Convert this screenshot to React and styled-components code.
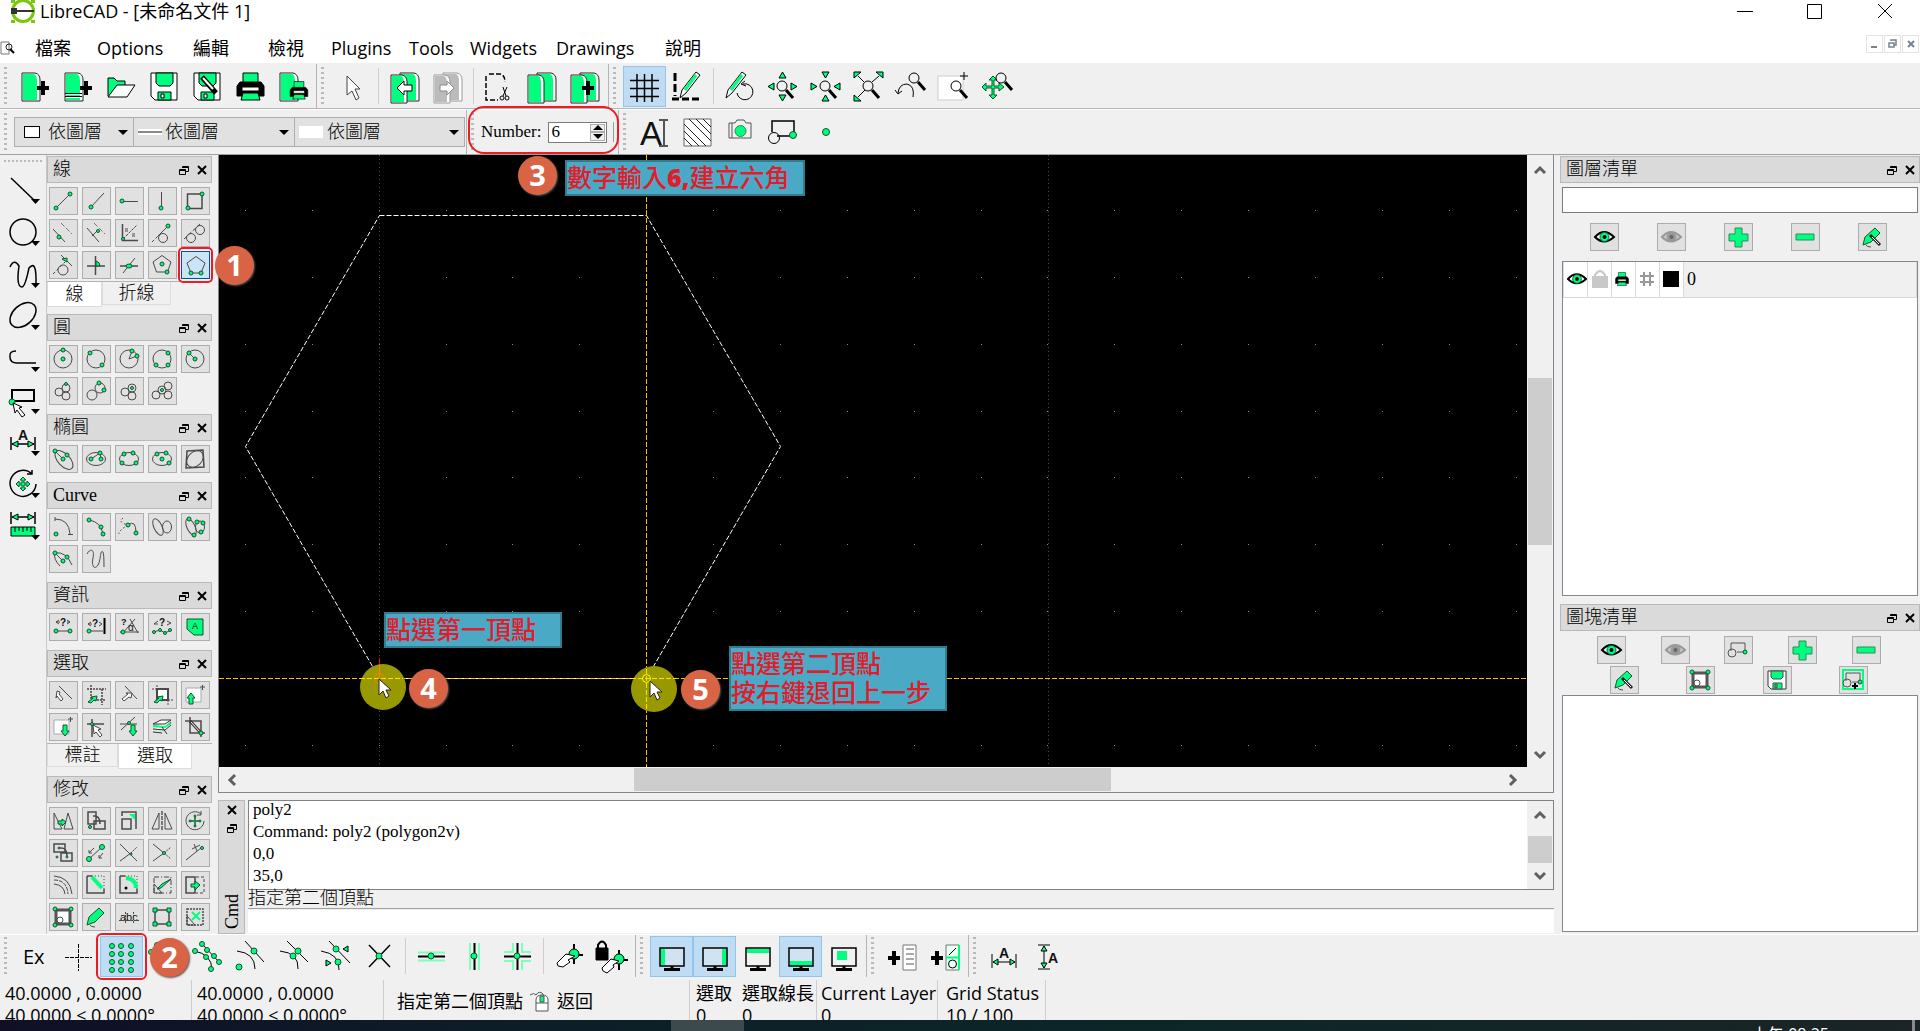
import React from "react";
import styled, { createGlobalStyle, css } from "styled-components";

const GREEN = "#00ff7f";

const UI_FONT = `"Open Sans", "Noto Sans CJK TC", sans-serif`;
const DOCK_FONT = `"Liberation Serif", "Noto Sans CJK TC", serif`;

const GlobalStyle = createGlobalStyle`
  * { box-sizing: border-box; }
  body {
    margin: 0;
    overflow: hidden;
    background: #f0f0f0;
    color: #000;
    font-family: ${UI_FONT};
    font-size: 18px;
    font-weight: 400;
  }
  button, input, select { font: inherit; color: inherit; }
  svg { display: block; }
`;

/* ---------- window ---------- */

const Window = styled.div`
  display: flex;
  flex-direction: column;
  height: 100vh;
  background: #f0f0f0;
`;

const TitleBar = styled.header`
  display: flex;
  height: 25px;
  padding-left: 11px;
  background: #fff;
  flex: none;
`;

const Title = styled.h1`
  flex: 1;
  margin: 0;
  padding-left: 5px;
  font-size: 18px;
  font-weight: 400;
  line-height: 23px;
  white-space: nowrap;
`;

const WindowControls = styled.div`
  display: flex;
`;

const WindowButton = styled.button`
  display: flex;
  justify-content: center;
  width: 70px;
  height: 24px;
  padding: 3px 0 0;
  border: 0;
  background: transparent;
`;

const MenuBar = styled.nav`
  display: flex;
  align-items: center;
  height: 38px;
  padding-top: 8px;
  background: #fff;
  flex: none;
`;

const MenuItem = styled.button`
  width: ${(p) => p.$w}px;
  height: 28px;
  padding: 0;
  border: 0;
  background: transparent;
  font-size: 18px;
  line-height: 28px;
  text-align: left;
  white-space: nowrap;
`;

const DocIcon = styled.div`
  width: 35px;
`;

const MdiControls = styled.div`
  display: flex;
  gap: 1px;
  margin-left: auto;
  padding: 0 1px 8px 0;
`;

const MdiButton = styled.button`
  width: 17px;
  height: 18px;
  padding: 0;
  border: 1px solid #e3e3e3;
  background: #fff;
`;

/* ---------- toolbars ---------- */

const ToolRow = styled.div`
  display: flex;
  flex: none;
  height: 46px;
  padding-bottom: ${(p) => (p.$raised ? 2 : 0)}px;
  border-top: 1px solid ${(p) => (p.$light ? "#f0f0f0" : "#fff")};
  border-bottom: 1px solid ${(p) => p.$line || "#b4b4b4"};
`;

const ToolBar = styled.div`
  position: relative;
  display: flex;
  align-items: center;
  padding-right: 1px;
  border-right: ${(p) => (p.$last ? "0" : "1px solid #b4b4b4")};
`;

const Grip = styled.span`
  width: 3px;
  height: 38px;
  margin: 0 7px 0 4px;
  background: repeating-linear-gradient(#b9b9b9 0 2px, transparent 2px 5px);
`;

const Separator = styled.span`
  width: 1px;
  height: 36px;
  margin: 0 4px;
  background: #cdcdcd;
`;

const ToolButton = styled.button`
  position: relative;
  width: 43px;
  height: 41px;
  padding: 0;
  border: 0;
  background: transparent;
  font-size: 20px;
  ${(p) =>
    p.$on &&
    css`
      background: #bfdcf3;
      box-shadow: inset 0 0 0 1px #8ec6f2;
    `}
`;

const Combo = styled.label`
  display: flex;
  align-items: center;
  width: ${(p) => p.$w}px;
  height: 30px;
  margin-left: -1px;
  padding: 0 5px 0 ${(p) => p.$pad}px;
  border: 1px solid #adadad;
  background: #e1e1e1;
`;

const Combos = styled.div`
  display: flex;
  padding-left: 1px;
`;

const Select = styled.select`
  flex: 1;
  min-width: 0;
  padding: 0;
  border: 0;
  background: transparent;
  appearance: none;
  font-family: ${DOCK_FONT};
  font-weight: 300;
  font-size: 18px;
`;

const Caret = styled.span`
  border: 5px solid transparent;
  border-top-color: #000;
  border-bottom: 0;
`;

const Swatch = styled.span`
  width: ${(p) => p.$w}px;
  height: 12px;
  margin-right: ${(p) => p.$gap}px;
  border: ${(p) => (p.$framed ? "1px solid #000" : "0")};
  background: #fff;
`;

const LineSwatch = styled.span`
  width: 24px;
  height: 6px;
  margin-right: 3px;
  border: solid #fff;
  border-width: 2px 0;
  background: #888;
`;

const NumberLabel = styled.label`
  margin-right: 7px;
  font-family: ${DOCK_FONT};
  font-size: 17px;
`;

const NumberBox = styled.div`
  display: flex;
  width: 59px;
  height: 21px;
  margin-right: 6px;
  border: 1px solid #7a7a7a;
  background: #fff;
`;

const NumberInput = styled.input`
  flex: 1;
  min-width: 0;
  padding: 0 2px;
  border: 0;
  background: transparent;
  font-family: ${DOCK_FONT};
  font-size: 17px;
`;

const Spinner = styled.div`
  display: flex;
  flex-direction: column;
  width: 15px;
  margin: 1px;
`;

const SpinButton = styled.button`
  display: grid;
  place-items: center;
  flex: 1;
  min-height: 0;
  padding: 0;
  border: 1px solid #adadad;
  background: #f0f0f0;
`;

const Clipped = styled.span`
  width: 1px;
  height: 20px;
  margin-right: 3px;
  background: #999;
`;

/* ---------- annotations ---------- */

const RedFrame = styled.span`
  position: absolute;
  inset: ${(p) => p.$inset};
  z-index: 4;
  border: 2px solid #ed1c24;
  border-radius: ${(p) => p.$r}px;
  pointer-events: none;
`;

const Badge = styled.span`
  position: absolute;
  left: ${(p) => p.$x}px;
  top: ${(p) => p.$y}px;
  z-index: 5;
  width: 39px;
  height: 39px;
  border-radius: 50%;
  background: #d96445;
  box-shadow: 1px 1px 2px #555;
  color: #fff;
  font-family: "Open Sans", sans-serif;
  font-size: 29px;
  font-weight: 700;
  line-height: 38px;
  text-align: center;
`;

const Callout = styled.div`
  position: absolute;
  left: ${(p) => p.$x}px;
  top: ${(p) => p.$y}px;
  width: ${(p) => p.$w}px;
  padding: 1px 0 2px;
  border: 2px solid #317d8f;
  background: #4aa9c5;
  color: #e31b2b;
  font-family: ${UI_FONT};
  font-size: 25px;
  font-weight: 500;
  line-height: 29px;
  white-space: nowrap;

  b { font-weight: 800; }
`;

/* ---------- work area ---------- */

const Body = styled.main`
  display: flex;
  flex: 1;
  min-height: 0;
`;

const SideBar = styled.div`
  width: 47px;
  padding-top: 5px;
  border-right: 1px solid #c8c8c8;
  flex: none;
`;

const SideGrip = styled.span`
  display: block;
  width: 38px;
  height: 2px;
  margin: 0 0 8px 4px;
  background: repeating-linear-gradient(90deg, #b9b9b9 0 2px, transparent 2px 4px);
`;

const SideButton = styled.button`
  display: block;
  width: 46px;
  height: 42px;
  padding: 0;
  border: 0;
  background: transparent;
`;

const DockColumn = styled.div`
  width: 165px;
  margin-right: 6px;
  padding-top: 1px;
  flex: none;
`;

const DockHeader = styled.div`
  display: flex;
  align-items: center;
  height: 27px;
  margin-bottom: ${(p) => p.$gap || 0}px;
  padding-left: 5px;
  border: 1px solid #b9b9b9;
  background: #dadada;
`;

const DockTitle = styled.h2`
  flex: 1;
  margin: 0;
  font-family: ${DOCK_FONT};
  font-size: 18px;
  font-weight: 300;
  line-height: 25px;
`;

const TinyButton = styled.button`
  width: 18px;
  height: 18px;
  padding: 4px;
  border: 0;
  background: transparent;
`;

const ButtonGrid = styled.div`
  display: grid;
  grid-template-columns: repeat(5, 29px);
  gap: 4px;
  padding: 4px 2px ${(p) => (p.$tabs ? 2 : 9)}px;
`;

const DockButton = styled.button`
  position: relative;
  width: 29px;
  height: 28px;
  padding: 0;
  border: 0;
  background: ${(p) => (p.$on ? "#cce4f7" : "#e1e1e1")};
  box-shadow: inset 0 0 0 1px ${(p) => (p.$on ? "#005499" : "#adadad")};
`;

const Tabs = styled.div`
  display: flex;
  height: 33px;
  align-items: flex-start;
  border-top: 1px solid #b4b4b4;
`;

const Tab = styled.button`
  width: ${(p) => p.$w}px;
  height: ${(p) => (p.$on ? 25 : 23)}px;
  padding: 0;
  border: 1px solid #dcdcdc;
  border-top: 0;
  background: ${(p) => (p.$on ? "#fff" : "#f0f0f0")};
  font-family: ${DOCK_FONT};
  font-size: 18px;
  font-weight: 300;
  line-height: 22px;
`;

const Center = styled.div`
  display: flex;
  flex-direction: column;
  flex: 1;
  min-width: 0;
`;

const Viewport = styled.section`
  display: grid;
  grid-template-columns: minmax(0, 1fr) 26px;
  grid-template-rows: minmax(0, 1fr) 25px;
  flex: 1;
  min-height: 0;
  border: 1px solid #828790;
  border-top: 0;
`;

const Canvas = styled.div`
  position: relative;
  background: #000;
`;

const ScrollBar = styled.div`
  display: flex;
  flex-direction: ${(p) => (p.$vertical ? "column" : "row")};
  min-width: 26px;
  padding: ${(p) => (p.$vertical ? "0 1px" : "1px 0")};
  background: #f0f0f0;
`;

const ScrollArrow = styled.button`
  display: grid;
  place-items: center;
  flex: 0 0 ${(p) => p.$size}px;
  padding: 0;
  border: 0;
  background: transparent;
`;

const Track = styled.span`
  flex: ${(p) => p.$size};
  background: ${(p) => (p.$thumb ? "#cdcdcd" : "transparent")};
`;

const CommandDock = styled.section`
  display: flex;
  gap: 3px;
  height: 134px;
  margin-top: 7px;
  flex: none;
`;

const CommandSide = styled.div`
  display: flex;
  flex-direction: column;
  align-items: center;
  width: 27px;
  border: 1px solid #b9b9b9;
  background: #dadada;
`;

const CommandTitle = styled.h2`
  margin: auto 0 4px;
  font-family: ${DOCK_FONT};
  font-size: 18px;
  font-weight: 400;
  line-height: 24px;
  writing-mode: vertical-rl;
  transform: rotate(180deg);
`;

const CommandMain = styled.div`
  display: flex;
  flex-direction: column;
  flex: 1;
  min-width: 0;
  font-family: ${DOCK_FONT};
`;

const CommandLog = styled.div`
  display: flex;
  height: 90px;
  border: 1px solid #828282;
  background: #fff;
`;

const LogLines = styled.div`
  display: flex;
  flex-direction: column;
  justify-content: flex-end;
  flex: 1;
  padding: 0 4px 2px;
  font-size: 17px;
  line-height: 22px;
  overflow: hidden;
`;

const CommandLabel = styled.label`
  height: 19px;
  border-bottom: 1px solid #a0a0a0;
  font-size: 18px;
  font-weight: 300;
  line-height: 17px;
`;

const CommandInput = styled.input`
  flex: 1;
  min-height: 0;
  margin: 1px 0;
  border: 0;
  background: #fff;
`;

const RightDock = styled.aside`
  display: flex;
  flex-direction: column;
  width: 360px;
  margin-left: 6px;
  padding-top: 1px;
  flex: none;
`;

const FilterInput = styled.input`
  height: 26px;
  margin: 4px 2px 10px;
  border: 1px solid #7a7a7a;
  background: #fff;
`;

const ButtonLine = styled.div`
  display: flex;
  justify-content: ${(p) => (p.$spread ? "space-between" : "space-evenly")};
  margin: 0 2px 2px;
  padding: ${(p) => (p.$spread ? "0 31px 0 28px" : "0 2px 0 0")};
`;

const ListBox = styled.div`
  flex: ${(p) => (p.$h ? `0 0 ${p.$h}px` : "1")};
  margin: ${(p) => p.$margin};
  border: 1px solid #828790;
  background: #fff;
`;

const LayerTable = styled.table`
  width: 100%;
  border-collapse: collapse;

  td {
    width: 24px;
    height: 35px;
    padding: 0 0 0 3px;
    border: 1px solid #d8d8d8;
    border-top: 0;
    background: #fff;
  }
  td:last-child {
    width: auto;
    background: #f0f0f0;
    font-family: ${DOCK_FONT};
    font-size: 18px;
  }
`;

const LayerColor = styled.span`
  display: block;
  width: 16px;
  height: 16px;
  background: #000;
`;

/* ---------- bottom ---------- */

const StatusBar = styled.footer`
  display: flex;
  flex: none;
  height: 40px;
  overflow: hidden;
  font-size: 18px;
`;

const StatusCell = styled.div`
  width: ${(p) => p.$w}px;
  padding-left: ${(p) => p.$pad || 5}px;
  padding-top: 2px;
  border-right: ${(p) => (p.$plain ? "0" : "1px solid #cdcdcd")};
  line-height: 22px;
  white-space: nowrap;
`;

const StatusHint = styled(StatusCell)`
  display: flex;
  align-items: center;
  gap: 7px;
`;

const TaskBar = styled.div`
  display: flex;
  justify-content: flex-end;
  flex: none;
  height: 11px;
  overflow: hidden;
  background: linear-gradient(90deg, transparent 671px, #3c4a4e 671px 744px, transparent 744px),
    linear-gradient(90deg, #100f26, #0c1f28 30%, #0c2628 60%, #1b2426);
`;

const Clock = styled.span`
  margin-right: 83px;
  padding-top: 5px;
  color: #fff;
  font-size: 16px;
  line-height: 18px;
  white-space: nowrap;
`;

const ShowDesktop = styled.span`
  width: 3px;
  margin-right: 5px;
  background: #8a8a8a;
`;

/* ---------- icon pieces ---------- */

const Small = ({ children }) => (
  <svg width="29" height="28" viewBox="0 0 29 28" fill="none" stroke="#4a4a4a" aria-hidden="true">
    {children}
  </svg>
);

const Big = ({ children }) => (
  <svg width="43" height="41" viewBox="0 0 43 41" fill="none" stroke="#000" aria-hidden="true">
    {children}
  </svg>
);

// green snap points, given as [x, y] pairs
const Pts = ({ at, r = 2 }) =>
  at.map(([x, y], i) => (
    <circle key={i} cx={x} cy={y} r={r} fill={GREEN} stroke="#14532d" />
  ));

const Word = ({ x, y, size, bold, children }) => (
  <text
    x={x}
    y={y}
    fontSize={size}
    fontWeight={bold ? 700 : 400}
    fontFamily="Liberation Sans, sans-serif"
    fill="#111"
    stroke="none"
  >
    {children}
  </text>
);

const Pointer = ({ x = 0, y = 0, flip }) => (
  <path
    transform={`translate(${x} ${y})${flip ? " rotate(180)" : ""}`}
    d="M0 0 L8 4 L5 5 L9 10 L7 12 L3 7 L1 9 Z"
    fill="#fff"
    stroke="#444"
  />
);

const Lens = ({ x, y, r = 5 }) => (
  <g>
    <circle cx={x} cy={y} r={r} />
    <path d={`M${x + r - 1} ${y + r - 1} l7 8`} strokeWidth="3" />
  </g>
);

const Eye = ({ off }) => (
  <>
    <path
      d="M5 14 Q14 4 24 14 Q14 23 5 14Z"
      fill={off ? "#ccc" : "#fff"}
      stroke={off ? "#999" : "#000"}
      strokeWidth="2"
    />
    <circle cx="14.5" cy="14" r="4.5" fill={off ? "#999" : GREEN} stroke={off ? "#999" : "#064"} />
    <circle cx="14.5" cy="14" r="2" fill={off ? "#666" : "#000"} stroke="none" />
  </>
);

const FloppySmall = () => (
  <>
    <path d="M5 5H23V23H8L5 20Z" fill="#fff" stroke="#333" />
    <path d="M8 5H20V11L18 13H10L8 11Z" fill={GREEN} />
    <path d="M10 23V17H19V23Z" fill={GREEN} />
    <path d="M12 18V22H14V18Z" />
  </>
);

const BlockSmall = () => (
  <>
    <path d="M7 15V7H21V15M13 16H20" stroke="#555" />
    <circle cx="8" cy="17" r="4" stroke="#555" />
    <Pts at={[[21, 16]]} />
  </>
);

const PenSmall = () => (
  <>
    <path d="M17 5 L22 10 L13 19 L5 22 L7 14Z" fill={GREEN} stroke="#14532d" />
    <path d="M8 22 Q9 24 13 24" />
  </>
);

const BlockEdit = () => (
  <>
    <path d="M7 7H21V21H7Z" fill="#fff" strokeWidth="3" stroke="#555" />
    <circle cx="11" cy="17" r="3" fill="#fff" />
    <Pts at={[[6, 6], [22, 6], [6, 22], [22, 22]]} r={2} />
  </>
);

const Plus = () => (
  <path d="M11 5H18V11H24V18H18V24H11V18H5V11H11Z" fill={GREEN} stroke="#2e8b57" />
);

const Minus = () => <path d="M5 11H23V17H5Z" fill={GREEN} stroke="#2e8b57" />;

const PenEdit = () => (
  <>
    <PenSmall />
    <path d="M12 12 L22 22" stroke="#222" strokeWidth="3" />
    <path d="M14 14 L21 21" stroke="#fff" />
  </>
);

const FloatIcon = () => (
  <svg width="10" height="10" viewBox="0 0 10 10" fill="none" stroke="currentColor">
    <path d="M3.5 3V1.5H9.5V6.5H7M3 2.500H9" />
    <path d="M.5 4.5H6.500V9.500H.5Z M1 5.500H7" />
  </svg>
);

const CloseIcon = () => (
  <svg width="10" height="10" viewBox="0 0 10 10" fill="none" stroke="currentColor" strokeWidth="2">
    <path d="M1 1 L9 9 M9 1 L1 9" />
  </svg>
);

/* ---------- dock icons (29 x 28) ---------- */

const lineIcons = [
  ["2 Points", <><path d="M7 21L21 7" /><Pts at={[[7, 21], [21, 7]]} /></>],
  ["Angle", <><path d="M9 20L22 6" /><Pts at={[[9, 20]]} /></>],
  ["Horizontal", <><path d="M7 14.5H23" /><Pts at={[[7, 14]]} /></>],
  ["Vertical", <><path d="M13.5 5V21" /><Pts at={[[13, 21]]} /></>],
  ["Rectangle", <><path d="M6.5 7H21V21.5H6.5Z" strokeWidth="1.5" /><Pts at={[[7, 21], [21, 7]]} /></>],
  ["Parallel through point", <><path d="M4 10L16 23" /><path d="M12 4L23 15" strokeDasharray="5 2" stroke="#777" /><Pts at={[[10, 18]]} /></>],
  ["Parallel", <><path d="M5 9L17 23M10 17L15 12" /><path d="M12 4L23 15" strokeDasharray="5 2" stroke="#777" /><Pts at={[[16, 12]]} r={1.5} /></>],
  ["Bisector", <><path d="M7.5 5V21.5H23" strokeWidth="1.5" /><path d="M8 20L22 6" strokeDasharray="3 1" /><path d="M10 10H13M10 12H13M17 15H20M17 17H20" /><Pts at={[[8, 20]]} r={1.5} /></>],
  ["Tangent point circle", <><circle cx="15" cy="19" r="4.5" /><path d="M4 23L10 17" strokeDasharray="3 2" /><path d="M10 17L20 7" /><Pts at={[[20, 7]]} /></>],
  ["Tangent two circles", <><circle cx="10" cy="19" r="4.5" /><circle cx="19" cy="11" r="4.5" /><path d="M3 20L20 4" strokeDasharray="4 2" /></>],
  ["Tangent orthogonal", <><circle cx="14" cy="19" r="5" /><path d="M12 4L23 15" /><path d="M4 23L16 11" strokeDasharray="3 2" /><path d="M13 8L18 7L18 11Z" fill={GREEN} stroke="#14532d" /></>],
  ["Orthogonal", <><path d="M5 15H23M13.5 5V24" strokeWidth="1.5" /><path d="M14 10Q18 11 18 15H14Z" fill={GREEN} stroke="#14532d" /></>],
  ["Relative angle", <><path d="M5 15H23" strokeWidth="1.5" /><path d="M8 22L20 7" /><ellipse cx="14" cy="15" rx="3" ry="2" fill={GREEN} stroke="#14532d" /></>],
  ["Polygon center corner", <><path d="M14 4.5L23 11L19.5 21H8.5L5 11Z" /><Pts at={[[14, 13], [19, 21]]} /></>],
  ["Polygon two corners", <><path d="M15 5.5L24 12L20 22H10L6 12Z" /><Pts at={[[10, 22], [20, 22]]} /></>],
];

const ring = <circle cx="14" cy="14" r="9" />;

const circleIcons = [
  ["Center point", <>{ring}<Pts at={[[14, 14], [14, 5]]} /></>],
  ["Two points", <>{ring}<Pts at={[[8, 8], [20, 20]]} /></>],
  ["Two points radius", <>{ring}<path d="M17 6L14 14L22 11" /><Pts at={[[17, 6], [22, 11]]} /></>],
  ["Three points", <>{ring}<Pts at={[[8, 20], [20, 20], [20, 8]]} /></>],
  ["Center radius", <>{ring}<path d="M8 8L14 14" /><Pts at={[[14, 14], [8, 8]]} /></>],
  ["Tangential 2c 1p", <><circle cx="10" cy="15" r="4" /><circle cx="17" cy="11" r="4" /><circle cx="17" cy="19" r="4" /><Pts at={[[17, 7]]} r={1.5} /></>],
  ["Tangential 1c 2p", <><circle cx="10" cy="18" r="5" /><circle cx="18" cy="11" r="5" /><Pts at={[[17, 6], [22, 13]]} /></>],
  ["Tangential 2c radius", <><circle cx="10" cy="15" r="4" /><circle cx="17" cy="11" r="4" /><circle cx="17" cy="19" r="4" /><Pts at={[[17, 11]]} r={1.5} /></>],
  ["Tangential 3c", <><circle cx="8" cy="18" r="4" /><circle cx="20" cy="9" r="4" /><circle cx="20" cy="18" r="4" /><circle cx="14" cy="13" r="4" /><Pts at={[[14, 13]]} r={1.5} /></>],
];

const oval = <ellipse cx="14" cy="14" rx="9.5" ry="6.5" />;

const ellipseIcons = [
  ["Ellipse axis", <><ellipse cx="15" cy="15" rx="11.5" ry="6" transform="rotate(47 15 15)" /><path d="M6 6L14 14" /><Pts at={[[6, 6], [18, 10], [14, 14]]} /></>],
  ["Foci point", <>{oval}<path d="M9 14L18 8L19 14" /><Pts at={[[9, 14], [18, 8], [19, 14]]} /></>],
  ["Four points", <>{oval}<Pts at={[[9, 9], [18, 8], [7, 18], [21, 18]]} /></>],
  ["Center and three points", <>{oval}<Pts at={[[9, 9], [18, 8], [21, 18], [14, 14]]} /></>],
  ["Inscribed", <><path d="M6 6L22 5L23 22L5 23Z" strokeWidth="1.5" /><ellipse cx="14" cy="14" rx="9.5" ry="7" transform="rotate(-45 14 14)" /></>],
];

const curveIcons = [
  ["Arc center", <><path d="M6 4V8M6 6Q20 6 21 21M19 21.5H24" /><Pts at={[[7, 21]]} /></>],
  ["Arc three points", <><path d="M7 7Q19 9 21 21" /><Pts at={[[7, 7], [19, 14], [21, 21]]} /></>],
  ["Arc tangential", <><path d="M8 5Q2 9 13 12Q3 18 4 21" strokeDasharray="2 2" /><path d="M13 12Q21 6 21 20" /><Pts at={[[13, 12], [21, 20]]} /></>],
  ["Spline closed", <><ellipse cx="10" cy="14" rx="4" ry="9" transform="rotate(-25 10 14)" /><ellipse cx="19" cy="14" rx="4.5" ry="6" /></>],
  ["Spline through points", <><ellipse cx="10" cy="14" rx="4" ry="9" transform="rotate(-25 10 14)" /><ellipse cx="19" cy="14" rx="4.5" ry="6" /><Pts at={[[8, 6], [16, 9], [22, 10], [20, 19], [13, 22]]} /></>],
  ["Ellipse arc", <><path d="M6 8L14 16M6 8Q4 14 11 21M6 8Q17 6 23 20" /><Pts at={[[6, 8], [18, 12], [14, 16]]} /></>],
  ["Freehand", <path d="M5 9C8 3 13 4 11 13S13 25 16 20S18 4 21 7Q22 9 22 22" />],
];

const infoIcons = [
  ["Distance point to point", <><path d="M7 18H21M7 9L10 7M7 9L10 11M7 9H11M21 9L18 7M21 9L18 11M21 9H18" /><Word x="11" y="13" size="10" bold>?</Word><Pts at={[[7, 18], [21, 18]]} /></>],
  ["Distance entity to point", <><path d="M7 18H21M6 11L9 9M6 11L9 13M6 11H10M20 11L17 9M20 11L17 13" /><path d="M22.5 5V21" strokeWidth="2" stroke="#000" /><Word x="10" y="14" size="10" bold>?</Word><Pts at={[[7, 18]]} /></>],
  ["Angle between lines", <><path d="M5 19H24M7 21L20 6M15 6L23 20" /><Word x="6" y="12" size="9" bold>?</Word><Word x="13" y="18" size="10">α</Word><Pts at={[[8, 19]]} /></>],
  ["Total length", <><path d="M6 19L12 17L17 20L23 17M6 11L10 8M6 11H10M23 10L19 8M23 10L19 12" /><Word x="11" y="13" size="10" bold>?</Word><Pts at={[[6, 19], [12, 17], [17, 20], [22, 17]]} r={1.5} /></>],
  ["Polygonal area", <><path d="M6 6H22V22H13L6 16Z" fill={GREEN} stroke="#14532d" /><Word x="11" y="16" size="9">A</Word></>],
];

const upArrow = (x, y) => (
  <path d={`M${x} ${y}l4 5h-2v6h-4v-6h-2z`} fill={GREEN} stroke="#14532d" />
);
const downArrow = (x, y) => (
  <path d={`M${x} ${y}l4 -5h-2v-6h-4v6h-2z`} fill={GREEN} stroke="#14532d" />
);
const slantArrow = (
  <path d="M6 21L11 17L9 16L15 15L14 20L12 19L9 22Z" fill={GREEN} stroke="#14532d" />
);

const selectIcons = [
  ["Deselect all", <><path d="M10 5L23 18" /><path d="M8 10L11 11L10 13L14 18L12 20L8 15L7 17Z" fill="#fff" /></>],
  ["Select window", <><path d="M5 8H24M9 4V22M20 8V24M9 19H24" strokeDasharray="2 1" strokeWidth="1.5" />{slantArrow}</>],
  ["Select entity", <><path d="M10 5L22 18" /><path d="M7 18L13 13L11 12L17 12L16 17L14 16L9 20Z" fill="#fff" /></>],
  ["Select contour", <><path d="M9 8H20V19H9Z" fill="#fff" strokeWidth="2" /><path d="M4 8H9M9 4V8M20 19V24M20 19H25" strokeDasharray="2 1" />{slantArrow}</>],
  ["Select all", <><path d="M5 7H20V21H5Z" fill="#fff" stroke="#aaa" /><path d="M19 6H24M21.5 4V9" />{upArrow(10, 12)}</>],
  ["Deselect window", <><path d="M5 7H20V21H5Z" fill="#fff" stroke="#aaa" /><path d="M19 6H24M21.5 4V9" />{downArrow(16, 23)}</>],
  ["Select single", <><path d="M5 11H22M10 6V24" strokeWidth="1.5" /><Pointer x={11} y={12} /><Pts at={[[10, 11]]} r={1.5} /></>],
  ["Select intersected", <><path d="M5 11H22M6 17L20 4" /><Pts at={[[14, 10]]} r={1.5} />{downArrow(18, 23)}</>],
  ["Select layer", <><path d="M5 11L13 7H23L17 11ZM5 13L17 14L23 9M5 16L17 17L23 12M5 19L14 20" fill="#fff" stroke="#333" /><path d="M5 13L17 14L23 10" stroke={GREEN} strokeWidth="2" /><path d="M14 14L19 21" stroke="#333" /></>],
  ["Invert selection", <><path d="M4 8H20V24M9 4V20H24" strokeWidth="1.5" /><path d="M9 8L20 20" stroke="#333" strokeWidth="3" /><path d="M10 9L19 19" stroke="#fff" /><Pts at={[[20, 20]]} /></>],
];

const modifyIcons = [
  ["Move", <><path d="M5 6V22H13ZM15 22L19 6L24 22Z" /><path d="M9 14H13V12L17 15L13 19V17H9Z" fill={GREEN} stroke="#14532d" /></>],
  ["Copy", <><path d="M6 5H14V17H6ZM12 14H23V22H12ZM11 9Q18 8 18 17" strokeWidth="1.5" /><Pts at={[[8, 20]]} r={1.5} /></>],
  ["Scale", <><path d="M7 12H16V22H7ZM7 9V5H21V22" strokeWidth="1.5" /><path d="M14 7H20V13Z" fill={GREEN} stroke="none" /></>],
  ["Mirror", <><path d="M11 6V22H4ZM17 6V22H24Z" /><path d="M14 4V24" stroke="#777" strokeDasharray="4 1" strokeWidth="2" /></>],
  ["Rotate", <><path d="M20 7A9 9 0 1 0 23 14" /><path d="M20 4V8H16" /><path d="M14 9V19M9 14H19" stroke="#2e8b57" strokeWidth="2" /><Pts at={[[14, 9], [14, 19], [9, 14], [19, 14]]} r={1} /></>],
  ["Move copy", <><path d="M5 5H16V13H5ZM12 14H23V22H12ZM11 9Q18 8 18 17" strokeWidth="1.5" /><Pts at={[[8, 18], [18, 18], [10, 9]]} r={1} /></>],
  ["Stretch", <><path d="M7 20L20 8M7 14L12 9M7 11V14H10M21 14L17 19M17 16V19H20" /><Pts at={[[7, 20], [20, 8]]} r={2.5} /></>],
  ["Trim", <><path d="M5 5L22 22M5 22L16 14" /><path d="M16 14L22 8" strokeDasharray="2 1" /><Pts at={[[16, 15]]} r={1} /></>],
  ["Trim two", <><path d="M5 5L16 14L5 22" /><path d="M16 14L23 20M16 14L23 8" strokeDasharray="2 1" /><Pts at={[[16, 14]]} r={1.5} /></>],
  ["Lengthen", <><path d="M5 21L20 9M13 5L16 12M11 10L19 6" /><Pts at={[[21, 9]]} r={1.5} /></>],
  ["Offset", <><path d="M5 5Q21 6 23 23M5 13Q15 14 16 23" /><path d="M5 9Q18 9 19 23" strokeDasharray="4 1" /></>],
  ["Bevel", <><path d="M5 5V22H22V18M5 5H10" strokeWidth="1.5" /><path d="M10 5H22V18" strokeDasharray="1 2" /><path d="M10 6L20 17" stroke={GREEN} strokeWidth="4" /></>],
  ["Fillet", <><path d="M5 5V22H22V18M5 5H10" strokeWidth="1.5" /><path d="M10 5H22V18" strokeDasharray="1 2" /><path d="M11 7Q21 8 21 17" stroke={GREEN} strokeWidth="4" /><circle cx="11" cy="17" r="1.5" fill="#000" stroke="none" /></>],
  ["Divide", <><path d="M6 6H23V22H6Z" strokeDasharray="5 2 1 2" /><path d="M6 13V22H14Z" /><path d="M9 18L13 17L23 8L14 13Z" fill={GREEN} stroke="#14532d" /></>],
  ["Explode text", <><path d="M14 6H5V22H14Z" strokeWidth="1.5" /><path d="M15 6H23V22H15" strokeDasharray="3 2" /><path d="M10 13H14V10L19 14L14 19V16H10Z" fill={GREEN} stroke="#14532d" /></>],
  ["Properties", <BlockEdit />],
  ["Attributes", <PenSmall />],
  ["Explode", <><Word x="5" y="18" size="11">abc</Word><path d="M4 17.5H25M10.5 9V20M18.5 9V20" strokeDasharray="2 1" /></>],
  ["Edit text", <><path d="M7 7H21V21H7Z" strokeWidth="1.5" /><path d="M5 5h4v4h-4zM19 5h4v4h-4zM5 19h4v4h-4zM19 19h4v4h-4z" fill={GREEN} stroke="#14532d" /></>],
  ["Delete", <><path d="M6 6H22V22H6Z" strokeDasharray="2 1" strokeWidth="1.5" /><path d="M6 13L14 22H6Z" /><path d="M11 9L19 17M19 9L11 17" stroke={GREEN} strokeWidth="2" /></>],
];

/* ---------- toolbar icons (43 x 41) ---------- */

const Book = ({ x = 8, y = 7, w = 18, off }) => (
  <>
    <path
      d={`M${x} ${y}h${w - 5}q5 1 5 7v21h-${w}z`}
      fill="#fff"
      stroke={off ? "#999" : "#222"}
    />
    <path d={`M${x + 1} ${y + 1}h${w - 7}q3 1 3 7v19h-${w - 4}z`} fill={off ? "#bbb" : GREEN} stroke="none" />
  </>
);
const plusAt = (x, y) => <path d={`M${x - 6} ${y}h12M${x} ${y - 7}v14`} strokeWidth="4" />;

const Floppy = () => (
  <>
    <path d="M8 7H34V34H12L8 30Z" fill="#fff" />
    <path d="M13 7H30V17L27 20H16L13 17Z" fill={GREEN} />
    <path d="M15 34V26H28V34Z" fill={GREEN} />
    <path d="M18 28V32H21V28Z" fill="#fff" />
  </>
);
const Printer = ({ x = 0, y = 0, s = 1 }) => (
  <g transform={`translate(${x} ${y}) scale(${s})`}>
    <path d="M14 7H29V18H14Z" fill={GREEN} />
    <path d="M11 16H32L35 20V30H8V20Z" fill="#000" />
    <path d="M13 21H30V25H13Z" fill="#fff" />
    <path d="M14 27H29L31 34H12Z" fill={GREEN} />
  </g>
);
const Pencil = () => (
  <>
    <path d="M27 7L31 10L17 28L11 33L13 25Z" fill="#fff" />
    <path d="M27 10L16 25" stroke={GREEN} strokeWidth="3" />
  </>
);

const fileTools = [
  ["New", <><Book />{plusAt(29, 22)}</>],
  ["New from template", <><Book /><path d="M9 28.5H25M9 31.5H25" stroke="#fff" /><path d="M8 27.5H25M8 30.5H25" />{plusAt(29, 22)}</>],
  ["Open", <><path d="M8 30V12H14L17 15H25V19" fill={GREEN} /><path d="M8 31L17 19H35L27 31Z" fill="#fff" /></>],
  ["Save", <Floppy />],
  ["Save as", <><Floppy /><path d="M16 11L30 27" strokeWidth="5" /><path d="M17 12L27 23" stroke="#fff" strokeWidth="2" /></>],
  ["Print", <Printer />],
  ["Print preview", <><Book /><Printer x={13} y={11} s={0.65} /></>],
];

const arrowLeft = "M14 22L21 15V19H29V25H21V29Z";

const editTools = [
  ["Select", <path d="M16 10V29L21 25L25 34L28 32L24 23H29Z" fill="#fff" stroke="#444" />],
  null,
  ["Undo", <><Book x={17} w={19} /><Book x={8} y={9} w={16} /><path d={arrowLeft} fill="#fff" /></>],
  ["Redo", <><Book x={17} w={19} off /><Book x={8} y={9} w={16} off /><path d="M28 22L21 15V19H14V25H21V29Z" fill="#fff" stroke="#888" /></>],
  null,
  ["Cut", <><path d="M11 8H22Q27 9 27 16M8 10V34H20" strokeDasharray="5 2" strokeWidth="1.5" /><path d="M25 21L28 30M29 21L25 30" /><circle cx="24" cy="32" r="2" /><circle cx="29" cy="32" r="2" /></>],
  ["Copy", <><Book x={16} w={19} /><Book x={7} y={9} w={16} /></>],
  ["Paste", <><Book x={16} w={19} /><Book x={7} y={9} w={16} />{plusAt(24, 22)}</>],
];

const tri = (d) => <path d={d} fill={GREEN} />;

const viewTools = [
  ["Grid", <path d="M7 14.5H36M7 22.5H36M7 30.5H36M14 8V36M21.5 8V36M29 8V36" strokeWidth="1.5" />, true],
  ["Draft", <><path d="M9 7V30" strokeDasharray="8 3" strokeWidth="3" /><path d="M6 33H36" strokeDasharray="7 3" strokeWidth="3" /><g transform="translate(3 -1)"><Pencil /></g></>],
  null,
  ["Redraw", <><g transform="translate(-3 -1)"><Pencil /></g><path d="M25 18A8 8 0 1 1 19 27M23 18L28 20M23 18L27 15" /></>],
  ["Zoom in", <><Lens x={21} y={20} />{tri("M21.5 6L25 12H18ZM21.5 35L18 29H25ZM7 20.5L13 17V24ZM36 20.5L30 17V24Z")}</>],
  ["Zoom out", <><Lens x={21} y={20} />{tri("M21.5 12L18 6H25ZM21.5 29L18 35H25ZM13 20.5L7 17V24ZM30 20.5L36 17V24Z")}</>],
  ["Zoom auto", <><Lens x={21} y={20} /><path d="M11 10L17 16M32 10L25 16M11 31L18 24" />{tri("M7 6H14L7 12ZM36 6H29L36 12ZM7 35V29L14 35Z")}</>],
  ["Zoom previous", <><Lens x={24} y={12} /><path d="M8 27Q9 18 17 18Q25 20 23 31M5 24L8 28L12 25" /></>],
  ["Zoom window", <><path d="M5 10H30V34H5Z" fill="#fff" stroke="#ccc" /><Lens x={23} y={20} /><path d="M27 10H35M31 6V14" /></>],
  ["Zoom pan", <><path d="M17 10L21 14H18V20H23V17L28 21L23 25V22H18V29H21L17 33L13 29H16V22H10V25L6 21L10 17V20H16V14H13Z" fill={GREEN} stroke="#14532d" /><Lens x={25} y={12} /></>],
];

const insertTools = [
  ["MText", <><Word x="7" y="33" size="33">A</Word><path d="M26 8H35M26 34H35M31 8V34" strokeWidth="2" stroke="#555" /></>],
  ["Hatch", <><path d="M8 7H35V34H8Z" fill="#fff" stroke="#666" /><path d="M8 12L30 34M8 19L23 34M8 26L16 34M13 7L35 29M20 7L35 22M27 7L35 15" stroke="#222" /></>],
  ["Image", <><path d="M10 11H16L18 8H25L27 11H32V26H10ZM13 11V26" stroke="#555" /><circle cx="21.5" cy="19" r="5.5" fill={GREEN} stroke="#2e8b57" /></>],
  ["Block", <><path d="M10 20V9H32V22M15 24H28" strokeWidth="1.5" /><circle cx="12" cy="26" r="5.5" /><Pts at={[[31, 23]]} r={3.5} /></>],
  ["Point", <Pts at={[[21, 20]]} r={3.5} />],
];

const snapTools = [
  ["Exclusive snap mode", <text x="9" y="28" fontSize="20" fontFamily="Open Sans, sans-serif" fill="#000" stroke="none">Ex</text>],
  ["Free snap", <path d="M8 21.5H35M21.5 8V35" strokeDasharray="4 1" strokeWidth="1" />],
  ["Snap on grid", <Pts r={2.5} at={[12, 21, 31].flatMap((x) => [10, 18, 26, 34].map((y) => [x, y]))} />, true],
  ["Snap on endpoints", <><path d="M8 16L32 30" /><Pts at={[[8, 16], [14, 9]]} r={2.5} /></>],
  ["Snap on entity", <><path d="M8 15Q26 18 26 34M16 8L35 28" /><Pts r={2.5} at={[[9, 15], [16, 8], [21, 14], [20, 21], [28, 20], [33, 26], [25, 33]]} /></>],
  ["Snap center", <><path d="M8 15Q26 17 26 33M16 5L35 26" /><Pts at={[[25, 15], [10, 31]]} r={3} /></>],
  ["Snap middle", <><path d="M8 15Q27 17 26 33M15 5L36 26" /><Pts at={[[26, 15], [21, 20]]} r={3} /></>],
  ["Snap distance", <><path d="M6 15Q25 18 24 34M14 5L35 27" /><Pts at={[[21, 13], [23, 26]]} r={3} /><path d="M33 10V16L28 13ZM11 24V30L16 27Z" fill={GREEN} /></>],
  ["Snap intersection", <><path d="M11 9L32 31M32 9L11 31" strokeWidth="1.5" /><Pts at={[[21, 20]]} r={3} /></>],
  null,
  ["Restrict horizontal", <><path d="M8 16.5H35M8 24.5H35" stroke="#7dffbd" strokeWidth="2" /><path d="M8 20.5H35" strokeWidth="2" /><Pts at={[[21, 20]]} r={3} /></>],
  ["Restrict vertical", <><path d="M17 7V34M26 7V34" stroke="#7dffbd" strokeWidth="2" /><path d="M21.5 7V34" strokeWidth="2" /><Pts at={[[21, 20]]} r={3} /></>],
  ["Restrict orthogonal", <><path d="M8 16H17V7M26 7V16H35M8 25H17V34M35 25H26V34" stroke="#7dffbd" strokeWidth="2" /><path d="M8 20.5H35M21.5 7V34" strokeWidth="2" /><Pts at={[[21, 20]]} r={3} /></>],
  null,
  ["Relative zero", <><path d="M26 8V28M17 19H35" strokeWidth="2" /><circle cx="26" cy="18" r="5" fill={GREEN} /><path d="M9 27L18 18L27 20L20 24L22 26L15 31L10 30Z" fill="#fff" /></>],
  ["Lock relative zero", <><path d="M7 13V9Q11 2 15 9V13" strokeWidth="2" /><path d="M5 12H17V24H5Z" fill="#000" /><path d="M28 14V34M19 24H37" strokeWidth="2" /><circle cx="28" cy="23" r="5" fill={GREEN} /><path d="M11 32L20 23L28 25L22 29L23 31L16 37L12 35Z" fill="#fff" /></>],
];

const Monitor = ({ children }) => (
  <>
    <path d="M10 12H34V30H10Z" fill="#f4f4f4" fillOpacity="0.3" strokeWidth="1.5" />
    {children}
    <path d="M22 30V33M14 33.5H30" strokeWidth="3" />
  </>
);

const dockTools = [
  ["Left dock", <Monitor><path d="M11 13H15V29H11Z" fill={GREEN} stroke="none" /></Monitor>, true],
  ["Right dock", <Monitor><path d="M29 13H33V29H29Z" fill={GREEN} stroke="none" /></Monitor>, true],
  ["Top dock", <Monitor><path d="M11 13H33V17H11Z" fill={GREEN} stroke="none" /></Monitor>],
  ["Bottom dock", <Monitor><path d="M11 25H33V29H11Z" fill={GREEN} stroke="none" /></Monitor>, true],
  ["Floating dock", <Monitor><path d="M15 15H25V24H15Z" fill={GREEN} stroke="none" /></Monitor>],
];

const creatorTools = [
  ["Menu creator", <>{plusAt(13, 22)}<path d="M22 9H35V34H22Z" fill="#fff" stroke="#777" /><path d="M25 13H33M25 18H33M25 23H33M25 28H33" stroke="#555" /></>],
  ["Toolbar creator", <>{plusAt(13, 22)}<path d="M22 9H35V34H22Z" fill="#e8fff3" stroke="#777" /><path d="M35 9V34M22 21.5H35" stroke={GREEN} strokeWidth="2" /><path d="M25 19L32 12" /><circle cx="28.5" cy="28" r="4" /></>],
];

const dimTools = [
  ["Linear horizontal", <><path d="M9 18V32M33 18V32M10 26H32" /><path d="M10 26L15 23V29ZM32 26L27 23V29Z" fill={GREEN} /><Word x="16" y="22" size="14" bold>A</Word></>],
  ["Linear vertical", <><path d="M12 9H24M12 33H24M18 10V32" /><path d="M18 10L15 15H21ZM18 32L15 27H21Z" fill={GREEN} /><Word x="22" y="27" size="14" bold>A</Word></>],
];

/* ---------- left side icons (46 x 42) ---------- */

const sideTools = [
  ["Line", <path d="M11 8L35 31" strokeWidth="1.5" />],
  ["Circle", <circle cx="23" cy="20" r="13" strokeWidth="1.5" />],
  ["Curve", <path d="M10 13Q14 4 19 12Q16 33 22 33Q25 33 29 14Q36 6 36 25V31" strokeWidth="1.5" />],
  ["Ellipse", <ellipse cx="23" cy="19" rx="15" ry="10" transform="rotate(-42 23 19)" strokeWidth="1.5" />],
  ["Polyline", <path d="M16 13Q9 13 10 19Q10 25 17 25H36" strokeWidth="1.5" />],
  ["Select", <><path d="M12 10H34V21H12Z" strokeWidth="2" /><Pts at={[[12, 22]]} r={3} /><path d="M13 23L22 27L19 28L25 35L22 37L17 30L15 33Z" fill="#fff" /></>],
  ["Dimension", <><path d="M11 15V28M35 15V28M12 22H34" strokeWidth="1.5" /><path d="M12 22L18 19V25ZM34 22L28 19V25Z" fill={GREEN} /><Word x="18" y="18" size="14" bold>A</Word></>],
  ["Modify", <><path d="M32 10A13 13 0 1 0 36 20M32 6V10H27" strokeWidth="1.5" /><path d="M23 13L26 16H24V19H27V17L30 20L27 23V21H24V24H26L23 27L20 24H22V21H19V23L16 20L19 17V19H22V16H20Z" fill={GREEN} stroke="#14532d" /></>],
  ["Info", <><path d="M11 6V18M35 6V18M12 11H34" strokeWidth="1.5" /><path d="M12 11L18 8V14ZM34 11L28 8V14Z" fill={GREEN} /><path d="M11 21H35V30H11Z" fill={GREEN} /><path d="M15 21V26M19 21V25M23 21V26M27 21V25M31 21V26" /></>],
];

/* ---------- composed parts ---------- */

function Tools({ items, renderExtra }) {
  return items.map((item, i) =>
    item === null ? (
      <Separator key={i} />
    ) : (
      <ToolButton key={item[0]} $on={item[2]} aria-label={item[0]} title={item[0]}>
        <Big>{item[1]}</Big>
        {renderExtra && renderExtra(item[0])}
      </ToolButton>
    )
  );
}

function Header({ title, gap }) {
  return (
    <DockHeader $gap={gap}>
      <DockTitle>{title}</DockTitle>
      <TinyButton aria-label="Float"><FloatIcon /></TinyButton>
      <TinyButton aria-label="Close"><CloseIcon /></TinyButton>
    </DockHeader>
  );
}

function Palette({ title, icons, tabs, selected }) {
  return (
    <section>
      <Header title={title} />
      <ButtonGrid $tabs={!!tabs}>
        {icons.map(([name, art]) => (
          <DockButton key={name} $on={name === selected} aria-label={name}>
            <Small>{art}</Small>
            {name === selected && (
              <>
                <RedFrame $inset="-4px -3px" $r={5} />
                <Badge $x={34} $y={-5}>1</Badge>
              </>
            )}
          </DockButton>
        ))}
      </ButtonGrid>
      {tabs && (
        <Tabs>
          {tabs.map(([name, w, on]) => (
            <Tab key={name} $w={w} $on={on}>{name}</Tab>
          ))}
        </Tabs>
      )}
    </section>
  );
}

function Chevron({ turn = 0 }) {
  return (
    <svg width="14" height="14" viewBox="0 0 14 14" fill="none" stroke="#606060" strokeWidth="3">
      <path d="M2 10L7 5L12 10" transform={`rotate(${turn} 7 7)`} />
    </svg>
  );
}

// sizes: [before thumb, thumb, after thumb]; arrows: [first, last] in px
function Scroll({ vertical, sizes, arrows }) {
  return (
    <ScrollBar $vertical={vertical}>
      <ScrollArrow $size={arrows[0]} aria-label="Back"><Chevron turn={vertical ? 0 : -90} /></ScrollArrow>
      <Track $size={sizes[0]} />
      <Track $size={sizes[1]} $thumb />
      <Track $size={sizes[2]} />
      <ScrollArrow $size={arrows[1]} aria-label="Forward"><Chevron turn={vertical ? 180 : 90} /></ScrollArrow>
    </ScrollBar>
  );
}

const GRID = 66.87;

function Drawing() {
  const dots = [];
  for (let c = 0; c < 20; c++) {
    for (let r = 0; r < 9; r++) {
      dots.push(
        <rect key={`${c}-${r}`} x={Math.round(26 + c * GRID)} y={Math.round(55 + r * GRID)} width="1" height="1" fill="#888" />
      );
    }
  }
  return (
    <svg width="100%" height="100%" fill="none" aria-label="Drawing">
      {dots}
      <path d="M160.5 0V613M829.5 0V613" stroke="#4a4a4a" strokeDasharray="1 3" />
      <path
        d="M160.5 60.5H427.5L561.5 291.5L427.5 523.5M160.5 523.5L26.5 291.5L160.5 60.5"
        stroke="#fff"
        strokeDasharray="5 2"
      />
      <path d="M160.5 523.5H427.5" stroke="#fff" />
      <path d="M160.5 503V543" stroke="#f00" />
      <line x1="0" y1="523.5" x2="100%" y2="523.5" stroke="#ffbf00" strokeDasharray="5 2" />
      <path d="M427.5 0V613" stroke="#ffbf00" strokeDasharray="5 2" />
      <circle cx="164" cy="532" r="23" fill="#989900" />
      <circle cx="435" cy="534" r="23" fill="#989900" />
      <path d="M160.5 509V532" stroke="#ff7f00" />
      <circle cx="160.5" cy="523.5" r="5" stroke="#ff7f00" />
      <path d="M141 523.5H184M412 523.5H458M427.5 514V556" stroke="#ffe100" strokeDasharray="5 2" />
      <circle cx="427.5" cy="523.5" r="4" stroke="#ff0" />
      {[[160, 524], [431, 526]].map(([x, y]) => (
        <path
          key={x}
          transform={`translate(${x} ${y})`}
          d="M0 0V16L4 12L7 19L10 17L7 11H12Z"
          fill="#fff"
          stroke="#222"
        />
      ))}
    </svg>
  );
}

function SmallButtons({ items }) {
  return items.map(([name, art]) => (
    <DockButton key={name} aria-label={name}><Small>{art}</Small></DockButton>
  ));
}

const menus = [
  ["檔案", 62], ["Options", 96], ["編輯", 75], ["檢視", 63], ["Plugins", 78],
  ["Tools", 61], ["Widgets", 86], ["Drawings", 109], ["說明", 40],
];

function App() {
  return (
    <Window>
      <GlobalStyle />
      <TitleBar>
        <svg width="24" height="24" viewBox="0 0 24 24" fill="none" aria-hidden="true">
          <path d="M0 0H4V3H0ZM20 0H24V3H20ZM0 20H4V23H0ZM20 20H24V23H20Z" fill="#7ac70c" />
          <circle cx="12" cy="11" r="10.5" stroke="#7ac70c" strokeWidth="3" />
          <path d="M0 8H6V10H23V12H6V14H0Z" fill="#333" />
        </svg>
        <Title>LibreCAD - [未命名文件 1]</Title>
        <WindowControls>
          <WindowButton aria-label="Minimize">
            <svg width="16" height="16" stroke="#000" fill="none"><path d="M0 8.5H16" /></svg>
          </WindowButton>
          <WindowButton aria-label="Maximize">
            <svg width="16" height="16" stroke="#000" fill="none"><path d="M.5 1.5H14.500V15.500H.5Z" /></svg>
          </WindowButton>
          <WindowButton aria-label="Close">
            <svg width="16" height="16" stroke="#000" fill="none"><path d="M1 1L15 15M15 1L1 15" /></svg>
          </WindowButton>
        </WindowControls>
      </TitleBar>

      <MenuBar>
        <DocIcon>
          <svg width="15" height="14" fill="none" stroke="#777" aria-hidden="true">
            <path d="M1 1H9V13H1Z" />
            <circle cx="9" cy="6" r="3" stroke="#222" />
            <path d="M10 8L14 12" stroke="#000" strokeWidth="2" />
          </svg>
        </DocIcon>
        {menus.map(([name, w]) => (
          <MenuItem key={name} $w={w}>{name}</MenuItem>
        ))}
        <MdiControls>
          <MdiButton aria-label="Minimize document">
            <svg width="15" height="16" stroke="#77838f" strokeWidth="2"><path d="M4 11H10" /></svg>
          </MdiButton>
          <MdiButton aria-label="Restore document">
            <svg width="15" height="16" stroke="#77838f" fill="none" strokeWidth="1.5">
              <path d="M6 5V4H11V9H9M4 7H9V11H4Z" />
            </svg>
          </MdiButton>
          <MdiButton aria-label="Close document">
            <svg width="15" height="16" stroke="#77838f" strokeWidth="2"><path d="M5 5L11 11M11 5L5 11" /></svg>
          </MdiButton>
        </MdiControls>
      </MenuBar>

      <ToolRow $light>
        <ToolBar><Grip /><Tools items={fileTools} /></ToolBar>
        <ToolBar><Grip /><Tools items={editTools} /></ToolBar>
        <ToolBar $last><Grip /><Tools items={viewTools} /></ToolBar>
      </ToolRow>

      <ToolRow $line="#a0a0a0">
        <ToolBar>
          <Grip />
          <Combos>
            <Combo $w={120} $pad={9}>
              <Swatch $w={16} $gap={8} $framed />
              <Select aria-label="Pen color"><option>依圖層</option></Select>
              <Caret />
            </Combo>
            <Combo $w={162} $pad={4}>
              <LineSwatch />
              <Select aria-label="Pen width"><option>依圖層</option></Select>
              <Caret />
            </Combo>
            <Combo $w={171} $pad={4}>
              <Swatch $w={24} $gap={4} />
              <Select aria-label="Pen line type"><option>依圖層</option></Select>
              <Caret />
            </Combo>
          </Combos>
        </ToolBar>
        <ToolBar>
          <Grip />
          <NumberLabel htmlFor="corner-count">Number:</NumberLabel>
          <NumberBox>
            <NumberInput id="corner-count" defaultValue="6" />
            <Spinner>
              <SpinButton aria-label="Increase">
                <svg width="10" height="5"><path d="M0 5L5 0L10 5Z" /></svg>
              </SpinButton>
              <SpinButton aria-label="Decrease">
                <svg width="10" height="5"><path d="M0 0L5 5L10 0Z" /></svg>
              </SpinButton>
            </Spinner>
          </NumberBox>
          <Clipped />
          <RedFrame $inset="-4px -1px 0 1px" $r={16} />
        </ToolBar>
        <ToolBar $last><Grip /><Tools items={insertTools} /></ToolBar>
      </ToolRow>

      <Body>
        <SideBar>
          <SideGrip />
          {sideTools.map(([name, art]) => (
            <SideButton key={name} aria-label={name}>
              <svg width="46" height="42" viewBox="0 0 46 42" fill="none" stroke="#000" aria-hidden="true">
                {art}
                <path d="M31 29H40L35.5 34Z" fill="#000" stroke="none" />
              </svg>
            </SideButton>
          ))}
        </SideBar>

        <DockColumn>
          <Palette
            title="線"
            icons={lineIcons}
            selected="Polygon two corners"
            tabs={[["線", 55, true], ["折線", 69, false]]}
          />
          <Palette title="圓" icons={circleIcons} />
          <Palette title="橢圓" icons={ellipseIcons} />
          <Palette title="Curve" icons={curveIcons} />
          <Palette title="資訊" icons={infoIcons} />
          <Palette title="選取" icons={selectIcons} tabs={[["標註", 71, false], ["選取", 74, true]]} />
          <Palette title="修改" icons={modifyIcons} />
        </DockColumn>

        <Center>
          <Viewport>
            <Canvas>
              <Drawing />
              <Badge $x={299} $y={1}>3</Badge>
              <Callout $x={346} $y={5} $w={240}>數字輸入<b>6,</b>建立六角</Callout>
              <Callout $x={165} $y={457} $w={178}>點選第一頂點</Callout>
              <Badge $x={190} $y={514}>4</Badge>
              <Badge $x={462} $y={515}>5</Badge>
              <Callout $x={510} $y={491} $w={218}>點選第二頂點<br />按右鍵退回上一步</Callout>
            </Canvas>
            <Scroll vertical arrows={[30, 25]} sizes={[193, 167, 197]} />
            <Scroll arrows={[25, 28]} sizes={[390, 478, 388]} />
          </Viewport>

          <CommandDock>
            <CommandSide>
              <TinyButton aria-label="Close"><CloseIcon /></TinyButton>
              <TinyButton aria-label="Float"><FloatIcon /></TinyButton>
              <CommandTitle>Cmd</CommandTitle>
            </CommandSide>
            <CommandMain>
              <CommandLog>
                <LogLines>
                  <div>poly2</div>
                  <div>Command: poly2 (polygon2v)</div>
                  <div>0,0</div>
                  <div>35,0</div>
                </LogLines>
                <Scroll vertical arrows={[28, 26]} sizes={[7, 27, 0]} />
              </CommandLog>
              <CommandLabel htmlFor="command">指定第二個頂點</CommandLabel>
              <CommandInput id="command" />
            </CommandMain>
          </CommandDock>
        </Center>

        <RightDock>
          <Header title="圖層清單" />
          <FilterInput aria-label="Layer filter" />
          <ButtonLine $spread>
            <SmallButtons
              items={[
                ["Show all layers", <Eye />],
                ["Hide all layers", <Eye off />],
                ["Add layer", <Plus />],
                ["Remove layer", <Minus />],
                ["Modify layer", <PenEdit />],
              ]}
            />
          </ButtonLine>
          <ListBox $h={335} $margin="8px 2px">
            <LayerTable>
              <tbody>
                <tr>
                  <td><svg width="20" height="18" viewBox="4 5 21 18"><Eye /></svg></td>
                  <td>
                    <svg width="18" height="20" fill="none" stroke="#c8c8c8" strokeWidth="2">
                      <path d="M4 9V6Q9 -2 14 6V9" />
                      <path d="M2 8H16V18H2Z" fill="#c8c8c8" />
                    </svg>
                  </td>
                  <td><svg width="14" height="16" viewBox="7 6 29 29" stroke="#000"><Printer /></svg></td>
                  <td>
                    <svg width="16" height="16" stroke="#999" strokeWidth="2">
                      <path d="M1 5H15M1 11H15M5 1V15M11 1V15" />
                    </svg>
                  </td>
                  <td><LayerColor /></td>
                  <td>0</td>
                </tr>
              </tbody>
            </LayerTable>
          </ListBox>
          <Header title="圖塊清單" gap={5} />
          <ButtonLine>
            <SmallButtons
              items={[
                ["Show all blocks", <Eye />],
                ["Hide all blocks", <Eye off />],
                ["Create block", <BlockSmall />],
                ["Add block", <Plus />],
                ["Remove block", <Minus />],
              ]}
            />
          </ButtonLine>
          <ButtonLine>
            <SmallButtons
              items={[
                ["Rename block", <PenEdit />],
                ["Edit block", <BlockEdit />],
                ["Save block", <FloppySmall />],
                ["Insert block", <><path d="M4 4H24V23H4Z" stroke={GREEN} strokeWidth="2" /><BlockSmall /><path d="M16 17V23M13 20H19" stroke="#000" strokeWidth="2" /></>],
              ]}
            />
          </ButtonLine>
          <ListBox $margin="-1px 2px 2px" />
        </RightDock>
      </Body>

      <ToolRow $line="#f0f0f0" $raised>
        <ToolBar>
          <Grip />
          <Tools
            items={snapTools}
            renderExtra={(name) =>
              name === "Snap on grid" && (
                <>
                  <RedFrame $inset="-3px -4px" $r={6} />
                  <Badge $x={50} $y={2}>2</Badge>
                </>
              )
            }
          />
        </ToolBar>
        <ToolBar><Grip /><Tools items={dockTools} /></ToolBar>
        <ToolBar><Grip /><Tools items={creatorTools} /></ToolBar>
        <ToolBar $last><Grip /><Tools items={dimTools} /></ToolBar>
      </ToolRow>

      <StatusBar>
        <StatusCell $w={192}>40.0000 , 0.0000<br />40.0000 &lt; 0.0000°</StatusCell>
        <StatusCell $w={192}>40.0000 , 0.0000<br />40.0000 &lt; 0.0000°</StatusCell>
        <StatusHint $w={306} $pad={13}>
          指定第二個頂點
          <svg width="20" height="22" fill="#fff" stroke="#555" aria-hidden="true">
            <path d="M0 5Q4 2 6 5Q9 0 13 4V6" fill="none" />
            <path d="M6 10Q6 5 12 5Q18 5 18 10V21H6Z" />
            <path d="M10 6H14V12H10Z" fill={GREEN} />
            <path d="M6 13H18" />
          </svg>
          返回
        </StatusHint>
        <StatusCell $w={47} $pad={6} $plain>選取<br />0</StatusCell>
        <StatusCell $w={80}>選取線長<br />0</StatusCell>
        <StatusCell $w={121} $pad={4}>Current Layer<br />0</StatusCell>
        <StatusCell $w={108} $pad={8}>Grid Status<br />10 / 100</StatusCell>
      </StatusBar>
      <TaskBar>
        <Clock>上午 08:25</Clock>
        <ShowDesktop />
      </TaskBar>
    </Window>
  );
}

export default App;
